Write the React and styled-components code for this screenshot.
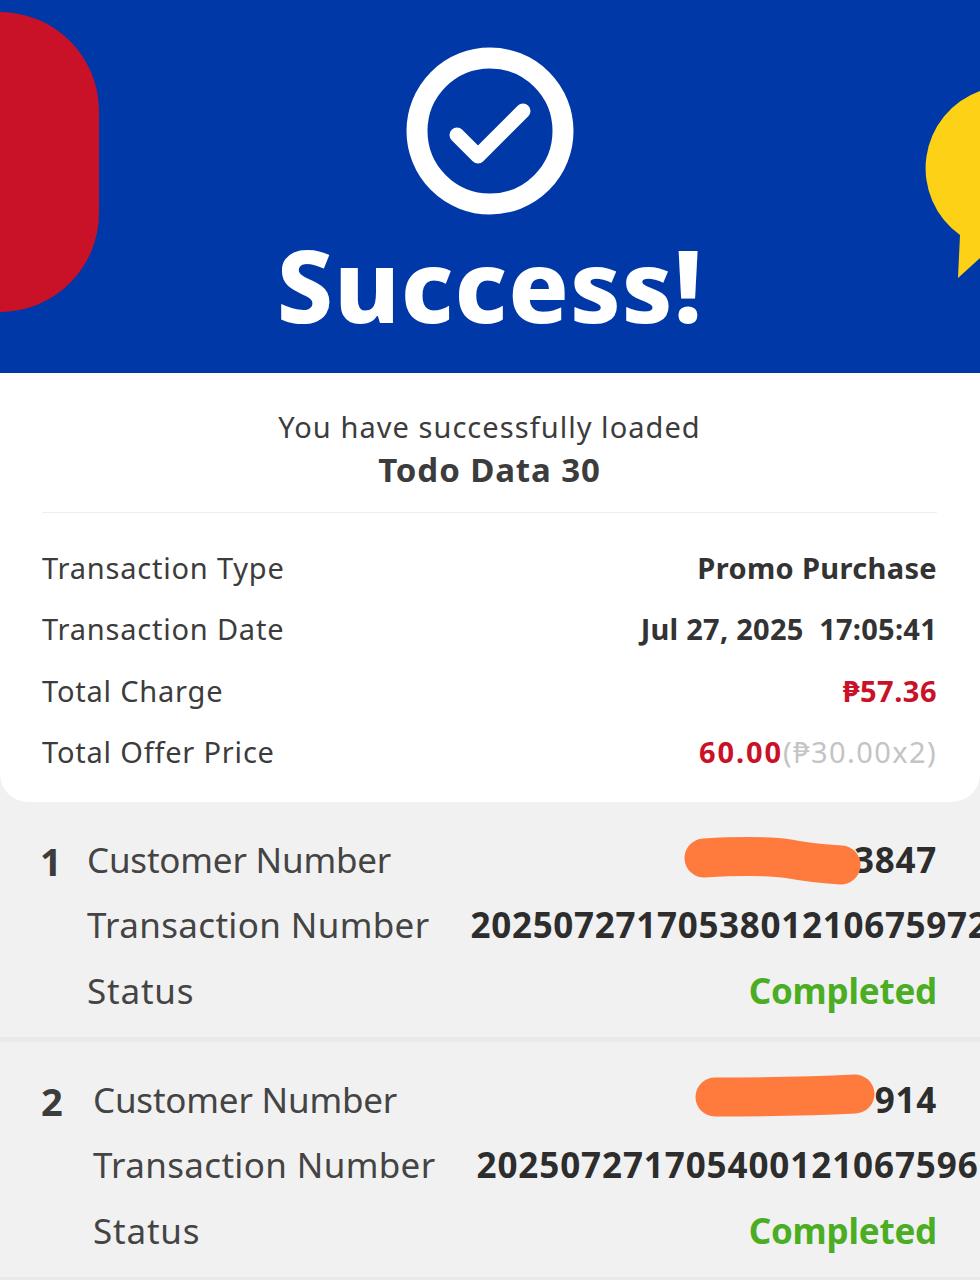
import React from 'react'
import styled, { createGlobalStyle } from 'styled-components'

const GlobalStyle = createGlobalStyle`
  html, body {
    margin: 0;
    padding: 0;
    background: #f1f1f1;
  }
  body {
    font-family: 'Noto Sans', 'DejaVu Sans', sans-serif;
    color: #3c3c3c;
  }
`

const Page = styled.div`
  width: 980px;
  height: 1280px;
  overflow: hidden;
  position: relative;
  background: #f1f1f1;
`

const Hero = styled.header`
  height: 373px;
  background: #0038a8;
  position: relative;
  overflow: hidden;
  display: flex;
  flex-direction: column;
  align-items: center;
  padding-top: 47px;
  box-sizing: border-box;
`

const RedBlob = styled.div`
  position: absolute;
  left: 0;
  top: 12px;
  width: 99px;
  height: 300px;
  background: #c91128;
  border-radius: 0 100px 100px 0;
`

const Bubble = styled.svg`
  position: absolute;
  right: 0;
  top: 85px;
  overflow: visible;
`

const SuccessTitle = styled.h1`
  margin: 1px 0 0;
  font-size: 100px;
  line-height: 136px;
  font-weight: 800;
  color: #fff;
  letter-spacing: 1px;
`

const Card = styled.section`
  background: #fff;
  height: 429px;
  box-sizing: border-box;
  border-radius: 0 0 28px 28px;
  padding: 33px 43px 0 42px;
`

const Loaded = styled.div`
  text-align: center;
  font-size: 29px;
  line-height: 42px;
  letter-spacing: 1.05px;
`

const Offer = styled.div`
  text-align: center;
  font-size: 33px;
  line-height: 44px;
  font-weight: 700;
  letter-spacing: 0.9px;
  margin-bottom: 20px;
`

const Rule = styled.div`
  height: 1px;
  background: #eeeeee;
  margin-bottom: 24px;
`

const Row = styled.div`
  display: flex;
  justify-content: space-between;
  align-items: center;
  height: 61.3px;
  font-size: 29px;
  letter-spacing: 0.8px;
  white-space: nowrap;
`

const Strong = styled.span`
  font-weight: 700;
  color: ${(p) => p.$color || '#333'};
  letter-spacing: ${(p) => p.$spacing || 0.3}px;
`

const Muted = styled.span`
  font-weight: 400;
  color: #c4c4c4;
  letter-spacing: 1.4px;
`

const Entry = styled.section`
  display: flex;
  height: 240px;
  box-sizing: border-box;
  padding: 25px 43px 0 ${(p) => p.$left}px;
  border-bottom: 5px solid #e9e9e9;
`

const Index = styled.div`
  width: ${(p) => p.$width}px;
  flex: none;
  font-size: 38px;
  font-weight: 700;
  line-height: 68px;
  color: #3c3c3c;
`

const Fields = styled.div`
  flex: 1;
  min-width: 0;
`

const Field = styled.div`
  display: flex;
  justify-content: space-between;
  gap: 41px;
  align-items: center;
  height: 65.3px;
  font-size: 35px;
  white-space: nowrap;
  color: #444;
`

const Label = styled.span`
  flex: none;
  letter-spacing: ${(p) => p.$spacing}px;
`

const Value = styled.span`
  position: relative;
  flex: none;
  font-weight: 700;
  letter-spacing: ${(p) => p.$spacing || 0}px;
  color: ${(p) => p.$color || '#2d2d2d'};
`

const Scribble = styled.svg`
  position: absolute;
  top: 0;
  right: ${(p) => p.$right}px;
  overflow: visible;
`

const entries = [
  {
    n: '1',
    left: 40,
    indexWidth: 47,
    tail: '3847',
    txn: '2025072717053801210675972',
    txnSpacing: 0.7,
    scribbleRight: 77,
    scribble: 'M24 22 C60 20 90 20 110 23 C130 27 145 28 161 29',
  },
  {
    n: '2',
    left: 41,
    indexWidth: 52,
    tail: '914',
    txn: '202507271705400121067596',
    txnSpacing: 0.9,
    scribbleRight: 62,
    scribble: 'M20 21 C70 21 120 20 160 18',
  },
]

export default function App() {
  return (
    <Page>
      <GlobalStyle />
      <Hero>
        <RedBlob />
        <Bubble width="55" height="200" viewBox="0 0 55 200">
          <path d="M55 6 A82 82 0 0 0 35 150 L33 193 L55 173 Z" fill="#fcd116" />
        </Bubble>
        <svg width="168" height="168" viewBox="0 0 168 168">
          <circle cx="84" cy="84" r="73" fill="none" stroke="#fff" strokeWidth="21" />
          <path
            d="M51 88 L72 109 L117 64"
            fill="none"
            stroke="#fff"
            strokeWidth="15"
            strokeLinecap="round"
            strokeLinejoin="round"
          />
        </svg>
        <SuccessTitle>Success!</SuccessTitle>
      </Hero>

      <Card>
        <Loaded>You have successfully loaded</Loaded>
        <Offer>Todo Data 30</Offer>
        <Rule />
        <Row>
          <span>Transaction Type</span>
          <Strong $spacing={0.35}>Promo Purchase</Strong>
        </Row>
        <Row>
          <span>Transaction Date</span>
          <Strong $spacing={0.25}>Jul 27, 2025&nbsp; 17:05:41</Strong>
        </Row>
        <Row>
          <span>Total Charge</span>
          <Strong $color="#c91128" $spacing={0.5}>₱57.36</Strong>
        </Row>
        <Row>
          <span>Total Offer Price</span>
          <span>
            <Strong $color="#c91128" $spacing={1.9}>60.00</Strong>
            <Muted>(₱30.00x2)</Muted>
          </span>
        </Row>
      </Card>

      {entries.map((e) => (
        <Entry key={e.n} $left={e.left}>
          <Index $width={e.indexWidth}>{e.n}</Index>
          <Fields>
            <Field>
              <Label $spacing={-0.2}>Customer Number</Label>
              <Value $spacing={0.7}>
                {e.tail}
                <Scribble $right={e.scribbleRight} width="180" height="48" viewBox="0 0 180 48">
                  <path d={e.scribble} fill="none" stroke="#ff7a3d" strokeWidth="39" strokeLinecap="round" />
                </Scribble>
              </Value>
            </Field>
            <Field>
              <Label $spacing={0.35}>Transaction Number</Label>
              <Value $spacing={e.txnSpacing}>{e.txn}</Value>
            </Field>
            <Field>
              <Label $spacing={0.8}>Status</Label>
              <Value $color="#4aad24" $spacing={-0.2}>Completed</Value>
            </Field>
          </Fields>
        </Entry>
      ))}
    </Page>
  )
}
